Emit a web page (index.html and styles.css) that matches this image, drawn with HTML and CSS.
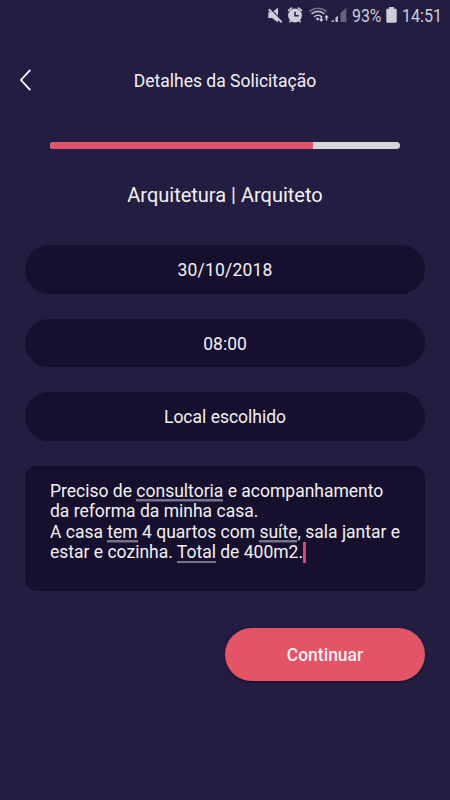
FILE: index.html
```html
<!DOCTYPE html>
<html lang="pt-BR">
<head>
<meta charset="utf-8">
<title>Detalhes da Solicitação</title>
<link rel="stylesheet" href="styles.css">
</head>
<body>
<div class="status">
  <svg class="status-icons" width="82" height="32" viewBox="0 0 82 32" aria-hidden="true">
    <path d="M0.3 12.3h3.7l6-4.5v14.6l-6-4.5h-3.7z" fill="#d0cdda"/>
    <path d="M1 8l13.5 13" stroke="#231d42" stroke-width="1.4"/>
    <path d="M0.7 9.2l13 13" stroke="#d0cdda" stroke-width="2"/>
    <circle cx="27" cy="15.5" r="6.9" fill="#d0cdda"/>
    <path d="M20 10.8l4-3.2M30 7.6l4 3.2M22.8 20.5l-1.3 1.8M31.2 20.5l1.3 1.8" stroke="#d0cdda" stroke-width="1.6"/>
    <path d="M27 11.8v3.9h3.6" fill="none" stroke="#231d42" stroke-width="1.5"/>
    <path d="M41.5 11.5q8.5-6.5 17 0" fill="none" stroke="#77728a" stroke-width="1.7"/>
    <path d="M43.5 13.9q6.5-5 13 0M46 16.8q4-3.2 8 0" fill="none" stroke="#c3c0cf" stroke-width="1.6"/>
    <path d="M47.8 18.6q1.8-1.6 3.6 0l-1.8 2.2z" fill="#d0cdda"/>
    <path d="M52.5 16.3v3h-1.6l2.4 2.7 2.4-2.7h-1.6v-3zM59.3 20.5v-3h1.4l-2.2-2.7-2.2 2.7h1.4v3z" fill="#d0cdda"/>
    <path d="M62.8 22l3-2.6v2.6zM67.5 22v-4.2l2.4-2.3v6.5z" fill="#c3c0cf"/>
    <path d="M72.5 22v-9l5.8-5.3v14.3z" fill="#69637f"/>
  </svg>
  <span class="percent">93%</span>
  <svg class="battery" width="11" height="32" viewBox="0 0 11 32" aria-hidden="true">
    <path d="M3 7h5v1.7h1.7q1 0 1 1v12.1q0 1-1 1h-8.4q-1 0-1-1v-12.1q0-1 1-1h1.7z" fill="#d0cdda"/>
  </svg>
  <span class="clock">14:51</span>
</div>
<header class="header">
  <svg class="back" width="14" height="24" viewBox="0 0 14 24" role="button" aria-label="Voltar">
    <path d="M11.3 1.8L2 12l9.3 10.2" fill="none" stroke="#fff" stroke-width="1.8"/>
  </svg>
  <h1 class="title">Detalhes da Solicitação</h1>
</header>
<main class="content">
  <div class="progress"><div class="progress-fill"></div></div>
  <h2 class="category">Arquitetura | Arquiteto</h2>
  <div class="fields">
    <div class="pill date">30/10/2018</div>
    <div class="pill">08:00</div>
    <div class="pill">Local escolhido</div>
    <div class="note">Preciso de <span class="mark">consultoria</span> e acompanhamento<br>da reforma da minha casa.<br>A casa <span class="mark">tem</span> 4 quartos com <span class="mark">suíte</span>, sala jantar e<br>estar e cozinha. <span class="mark">Total</span> de 400m2.<span class="caret"></span></div>
  </div>
  <button class="next">Continuar</button>
</main>
</body>
</html>
```
FILE: styles.css
```css
* { box-sizing: border-box; }
body {
  margin: 0;
  width: 450px;
  height: 800px;
  overflow: hidden;
  background: #231d42;
  color: #f3f1f5;
  font-family: Roboto, sans-serif;
}
h1, h2 { margin: 0; font-weight: 400; }
.status {
  display: flex;
  height: 32px;
  padding-left: 268px;
  color: #d0cdda;
  font-size: 18.7px;
  line-height: 33px;
}
.status-icons, .battery { flex: none; }
.percent {
  flex: none;
  width: 34px;
  margin-left: 2px;
  transform: scaleX(0.85);
  transform-origin: left;
}
.clock {
  flex: none;
  width: 48px;
  margin-left: 5px;
  transform: scaleX(0.86);
  transform-origin: left;
}
.header {
  display: grid;
  grid-template-columns: 14px 1fr 14px;
  align-items: center;
  height: 96px;
  padding: 0 19px;
}
.title {
  padding-top: 2px;
  text-align: center;
  font-size: 17.5px;
}
.content { padding: 14px 25px 0; }
.progress {
  height: 7px;
  margin: 0 25px;
  border-radius: 4px;
  overflow: hidden;
  background: #d6d5d9;
}
.progress-fill {
  width: 75%;
  height: 100%;
  background: #df546a;
}
.category {
  margin-top: 33px;
  height: 26px;
  line-height: 26px;
  text-align: center;
  font-size: 20px;
}
.fields {
  display: grid;
  gap: 25px;
  margin-top: 37px;
}
.pill {
  height: 48.6px;
  border-radius: 25px;
  background: #160f2d;
  text-align: center;
  font-size: 17.5px;
  line-height: 51px;
}
.date { letter-spacing: 0.2px; }
.note {
  height: 125px;
  padding: 15px 25px;
  border-radius: 12px;
  background: #160f2d;
  font-size: 17.5px;
  line-height: 20.5px;
  white-space: nowrap;
}
.mark {
  padding-bottom: 1px;
  background: linear-gradient(#77728a, #77728a) left bottom / 100% 2.5px no-repeat;
}
.caret {
  display: inline-block;
  width: 3px;
  height: 21px;
  margin: -4px 0;
  vertical-align: -1px;
  background: #d4477d;
}
.next {
  display: block;
  width: 200px;
  height: 53px;
  margin: 37px 0 0 auto;
  padding: 1px 0 0;
  border: 0;
  border-radius: 27px;
  background: #e25466;
  box-shadow: 0 1px 3px rgba(10, 5, 25, 0.55);
  color: #f8eff3;
  font: 500 17.5px/53px Roboto, sans-serif;
}
```
